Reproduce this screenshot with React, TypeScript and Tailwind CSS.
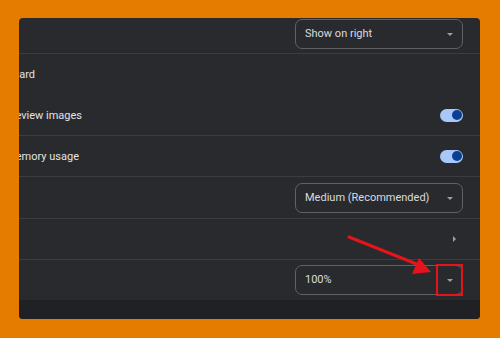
import { ReactNode } from "react";

const font = { fontFamily: 'Roboto, "Noto Sans", Arial, sans-serif' };

function Caret() {
  return (
    <svg width="8" height="5" viewBox="0 0 8 5" className="shrink-0">
      <path d="M1 1h6L4 4z" fill="#9aa0a6" />
    </svg>
  );
}

function Select({ value }: { value: string }) {
  return (
    <div className="flex h-[30px] w-[168px] items-center justify-between rounded-[7px] border border-[#5f6368] bg-[#292a2d] pl-[9px] pr-[8px] pt-[1px] text-[11px] text-[#dadce0]">
      <span>{value}</span>
      <Caret />
    </div>
  );
}

function Toggle() {
  return (
    <div className="flex h-[13px] w-[23px] items-center justify-end rounded-full bg-[#a8c7fa] pr-[1.5px]">
      <div className="h-[10px] w-[10px] rounded-full bg-[#0b3f91]" />
    </div>
  );
}

// label cut off by the left edge of the panel
function Label({ text, w }: { text: string; w: string }) {
  return (
    <div className={`flex ${w} justify-end overflow-hidden whitespace-nowrap pt-[2px] text-[11px] text-[#e3e3e3]`}>
      {text}
    </div>
  );
}

function Row({ children, className = "" }: { children: ReactNode; className?: string }) {
  return <div className={`flex items-center justify-between pr-[17px] ${className}`}>{children}</div>;
}

export default function App() {
  return (
    <div className="h-[338px] w-[500px] bg-[#e57c00] pb-[19px] pl-[19px] pr-[20px] pt-[18px]" style={font}>
      <div className="relative flex h-full flex-col overflow-hidden rounded-[4px] bg-[#292a2d]">
        <Row className="h-[36px] items-start border-b border-[#3c3d41] pt-[1px]">
          <div />
          <Select value="Show on right" />
        </Row>
        <Row className="h-[41px]">
          <Label text="Tab hover preview card" w="w-[16px]" />
        </Row>
        <Row className="h-[41px] border-b border-[#3c3d41]">
          <Label text="Show preview images" w="w-[63px]" />
          <Toggle />
        </Row>
        <Row className="h-[41px] border-b border-[#3c3d41]">
          <Label text="Show memory usage" w="w-[60px]" />
          <Toggle />
        </Row>
        <Row className="h-[42px] border-b border-[#3c3d41]">
          <div />
          <Select value="Medium (Recommended)" />
        </Row>
        <Row className="h-[41px] border-b border-[#3c3d41]">
          <div />
          <svg width="5" height="8" viewBox="0 0 5 8" className="mr-[6px]">
            <path d="M1 1v6l3-3z" fill="#9aa0a6" />
          </svg>
        </Row>
        <Row className="h-[40px]">
          <div />
          <Select value="100%" />
        </Row>
        <div className="flex-1 bg-[#202124]" />

        <div className="absolute left-[417px] top-[246px] h-[32px] w-[27px] border-2 border-[#e3141b]" />
        <svg className="absolute left-0 top-0" width="461" height="301" viewBox="0 0 461 301">
          <line x1="330" y1="219" x2="400" y2="247" stroke="#e3141b" strokeWidth="3" strokeLinecap="round" />
          <path d="M412 254 L393 256 L400 240 Z" fill="#e3141b" />
        </svg>
      </div>
    </div>
  );
}
